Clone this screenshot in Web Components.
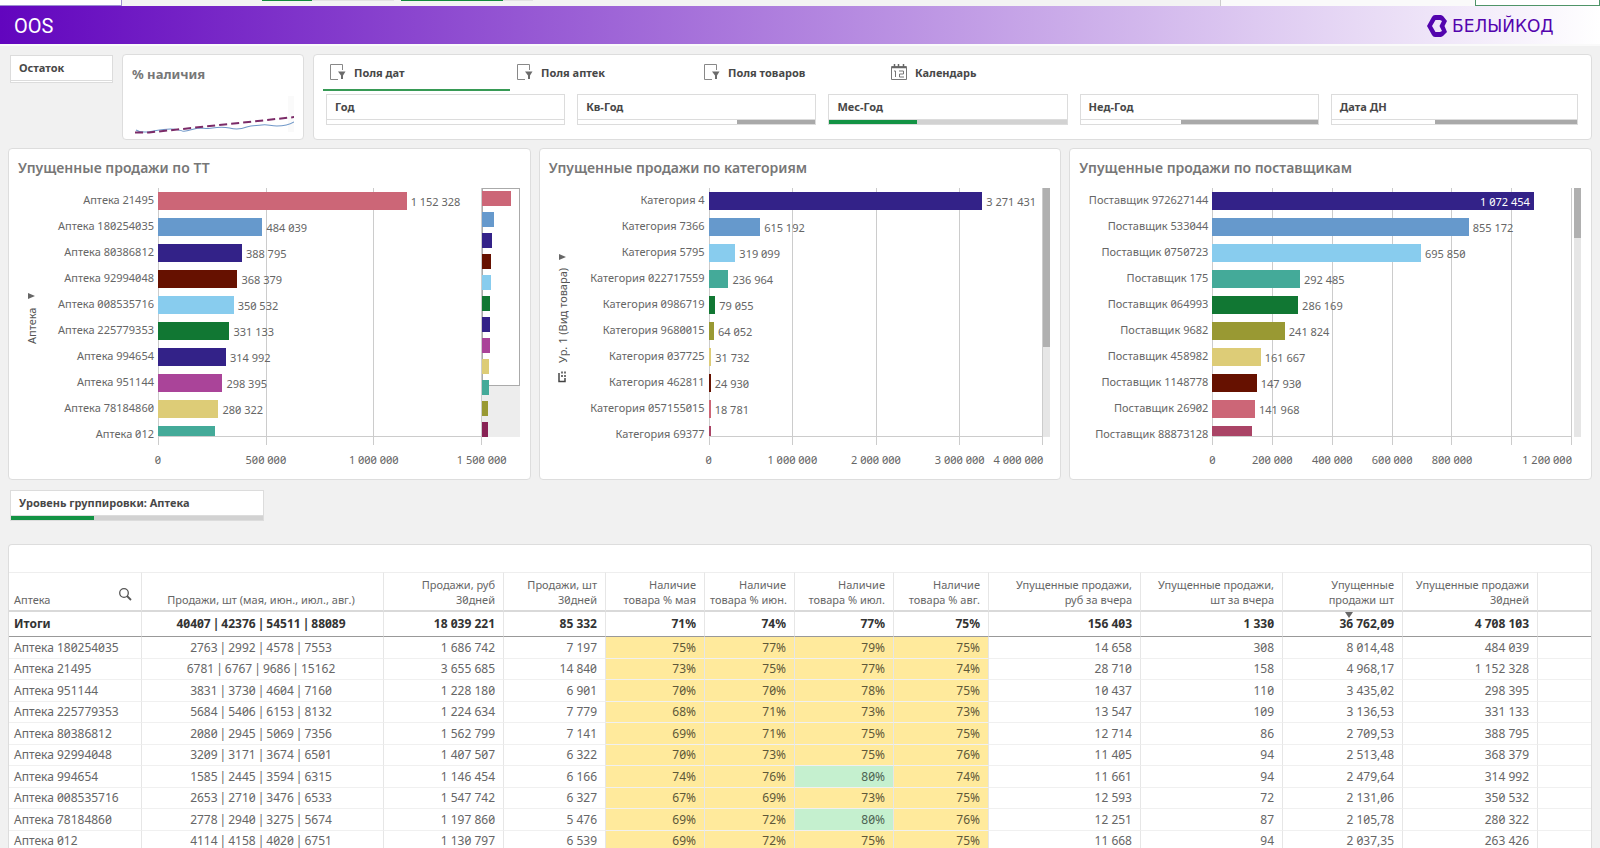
<!DOCTYPE html>
<html lang="ru">
<head>
<meta charset="utf-8">
<title>OOS</title>
<style>
  html, body { margin: 0; height: 100%; }
  body { overflow: hidden; background: #f1f1f1; color: #666; font: 12px/15px "Noto Sans", "Open Sans", sans-serif; font-feature-settings: "zero"; }
</style>
</head>
<body>
<oos-dashboard></oos-dashboard>

<script>
const define = (name, css, render) => customElements.define(name, class extends HTMLElement {
  connectedCallback() {
    if (this.shadowRoot) return;
    this.attachShadow({ mode: 'open' });
    const t = document.createElement('template');
    t.innerHTML = `<style>*{box-sizing:border-box} button{font:inherit;font-feature-settings:inherit;color:inherit;background:none;border:0;padding:0;text-align:left;cursor:pointer}${css}</style>${render(this)}`;
    this.shadowRoot.append(t.content.cloneNode(true));
  }
});
const fmt = n => String(n).replace(/\B(?=(\d{3})+$)/g, '\u00a0');

/* Strip of the selection bar above the sheet */
define('selection-strip', `
  :host { display: flex; flex: none; height: 6px; background: #f3f3f3; }
  .first { width: 122px; background: #fff; border: solid #9d8fd0; border-width: 0 1px 1px 0; }
  .bars { flex: 1; display: flex; padding-left: 140px; }
  i { height: 1px; background: #e2e2e2; }
  i.on { background: #128a3c; }
  .tail { width: 255px; border-left: 1px solid #ccc; background: #fafafa; }
  .last { width: 125px; border: 1px solid #4f9468; border-top: 0; background: #fff; }
`, () => `<div class="first"></div>
  <div class="bars"><i class="on" style="width:50px"></i><i style="width:82px"></i><i style="width:7px;background:none"></i><i class="on" style="width:102px"></i><i style="width:30px"></i></div>
  <div class="tail"></div><div class="last"></div>`);

/* Sheet title with the company mark */
define('sheet-banner', `
  :host { display: flex; flex: none; align-items: center; justify-content: space-between; height: 40px; padding: 2px 37px 0 14px;
    border-bottom: 2px solid #fafafa; background: linear-gradient(90deg, #6205be, #fff); }
  h1 { margin: 0; font: 400 20px/24px Roboto, sans-serif; color: #fff; }
  a { display: flex; align-items: center; gap: 5px; width: 136px; color: #5304ae; text-decoration: none; font: 17px/20px "DejaVu Sans", sans-serif; }
`, () => `<h1><slot></slot></h1>
  <a href="#"><svg width="20" height="22" viewBox="0 0 20 22"><path fill="currentColor" fill-rule="evenodd" d="M0 11 5 2Q6 0 8 0h6l2 1 4 5-2.500 5 2.500 6-4 4-2 1H8q-2 0-3-2zM5 11 8.500 17h4.500l2-1-2.500-5L15 6l-2-1H8.500z"/></svg>БЕЛЫЙКОД</a>`);

/* Collapsed list box; the strip at the bottom shows the selection state */
define('filter-box', `
  :host { display: block; min-width: 0; }
  button { display: block; width: 100%; height: 31px; border: 1px solid #dcdcdc; background: #fff; }
  span { display: block; height: 25px; padding-left: 8px; font-weight: 700; font-size: 11px; line-height: 24px; color: #484848; border-bottom: 1px solid #dcdcdc; }
  i { display: block; height: 4px; }
  :host([small]) button { height: 28px; }
  :host([small]) i { height: 1px; }
`, el => `<button type="button"><span><slot></slot></span><i style="background:${el.getAttribute('state') || '#fff'}"></i></button>`);

define('sheet-card', `
  :host { display: block; min-width: 0; background: #fff; border: 1px solid #ddd; border-radius: 4px; }
`, () => `<slot></slot>`);

define('trend-kpi', `
  :host { display: flex; flex-direction: column; justify-content: space-between; height: 84px; padding: 9px 9px 4px; }
  h2 { margin: 0; font-size: 13px; line-height: 20px; font-weight: 700; color: #777; }
  svg { display: block; width: 100%; height: 40px; }
`, () => `<h2><slot></slot></h2>
  <svg viewBox="0 0 161 40" preserveAspectRatio="none" fill="none">
    <path d="M155 1h6v36h-6z" fill="#fafafa"/>
    <path d="M4 35c4 3 8 2 12 2 7-1 14-3 22-3 6 0 8 1 12 2 5 1 9-2 16-3 5 0 10 1 14 0 6-1 12-1 17 0 7 2 12 1 17-1 6-2 10-1 15-2 6-1 8 1 15 1 7 0 12-1 17-4" stroke="#6f97c8"/>
    <path d="M3 37.500h14L162 22" stroke="#7b2b68" stroke-width="2" stroke-dasharray="8 4"/>
  </svg>`);

const FILTER_ICON = `<svg width="16" height="16" viewBox="0 0 16 16"><path d="M12.500 6V.5H.5v15h7.500" fill="none" stroke="#888"/><path d="M8 7.500h7.500L13 11.500V15h-2v-3.500z" fill="#6c6c6c"/></svg>`;
const CAL_ICON = `<svg width="16" height="16" viewBox="0 0 16 16" fill="none" stroke="#777"><path d="M.5 2.500h15v13H.5z"/><path d="M1 3.500h14M3.500 0v3M7.500 0v3M12.500 0v3" stroke="#666" stroke-width="1.500"/><path d="M3 7h1.500v6M8 7h4.500v3H8.500v3H13"/></svg>`;
define('tab-strip', `
  :host { display: flex; margin-left: 9px; height: 36px; }
  button { display: flex; align-items: center; gap: 8px; width: 187px; padding: 0 7px; font-weight: 700; font-size: 11px; color: #484848; border-bottom: 2px solid transparent; }
  button[aria-selected=true] { border-color: #379a55; }
`, () => ['Поля дат', 'Поля аптек', 'Поля товаров', 'Календарь'].map((t, i) =>
  `<button type="button" role="tab" aria-selected="${!i}">${i < 3 ? FILTER_ICON : CAL_ICON}<span>${t}</span></button>`).join(''));

/* Horizontal bar chart with gridlines, value labels and a scroll strip */
const CHARTS = {
  shops: { title: 'Упущенные продажи по ТТ', axis: 'Аптека', label: 149, side: 38, max: 1500000, steps: 3, mini: true,
    data: [['Аптека 21495', 1152328, '#cc6677'], ['Аптека 180254035', 484039, '#6699cc'], ['Аптека 80386812', 388795, '#332288'], ['Аптека 92994048', 368379, '#661100'], ['Аптека 008535716', 350532, '#88ccee'], ['Аптека 225779353', 331133, '#117733'], ['Аптека 994654', 314992, '#332288'], ['Аптека 951144', 298395, '#aa4499'], ['Аптека 78184860', 280322, '#ddcc77'], ['Аптека 012', 263426, '#44aa99']] },
  categories: { title: 'Упущенные продажи по категориям', axis: 'Ур. 1 (Вид товара)', drill: true, label: 169, side: 7, max: 4000000, steps: 4, thumb: 159,
    data: [['Категория 4', 3271431, '#332288'], ['Категория 7366', 615192, '#6699cc'], ['Категория 5795', 319099, '#88ccee'], ['Категория 022717559', 236964, '#44aa99'], ['Категория 0986719', 79055, '#117733'], ['Категория 9680015', 64052, '#999933'], ['Категория 037725', 31732, '#ddcc77'], ['Категория 462811', 24930, '#661100'], ['Категория 057155015', 18781, '#cc6677'], ['Категория 69377', 18000, '#aa4466']] },
  vendors: { title: 'Упущенные продажи по поставщикам', label: 142, side: 9, max: 1200000, steps: 6, skip: 5, thumb: 50,
    data: [['Поставщик 972627144', 1072454, '#332288'], ['Поставщик 533044', 855172, '#6699cc'], ['Поставщик 0750723', 695850, '#88ccee'], ['Поставщик 175', 292485, '#44aa99'], ['Поставщик 064993', 286169, '#117733'], ['Поставщик 9682', 241824, '#999933'], ['Поставщик 458982', 161667, '#ddcc77'], ['Поставщик 1148778', 147930, '#661100'], ['Поставщик 26902', 141968, '#cc6677'], ['Поставщик 88873128', 131900, '#aa4466']] }
};
define('bar-chart', `
  :host { display: block; height: 330px; font-size: 11px; }
  h2 { margin: 0; padding: 9px 9px 10px; font-size: 14px; line-height: 20px; font-weight: 600; color: #777; }
  .body { display: grid; grid-template-rows: 249px 8px 29px; padding-right: 10px; }
  .left { grid-row: 1; display: flex; padding-right: 4px; }
  .axis { display: flex; align-items: center; justify-content: center; gap: 8px; width: 20px; margin: 12px 0 0 13px; writing-mode: vertical-rl; transform: rotate(180deg); line-height: 20px; color: #555; white-space: nowrap; }
  .axis .drill { transform: rotate(90deg); }
  .labels { flex: 1; min-width: 0; text-align: right; white-space: nowrap; }
  .labels div { height: 26px; line-height: 24px; }
  .grid { grid-area: 1 / 2 / 3 / 3; display: flex; }
  .grid i { flex: 1; border-left: 1px solid #ccc; }
  .grid i:last-child { border-right: 1px solid #ccc; }
  .rows { grid-area: 1 / 2 / 2 / 3; overflow: hidden; padding-top: 4px; border-bottom: 1px solid #ccc; z-index: 1; }
  .row { display: flex; align-items: center; height: 18px; margin-bottom: 8px; white-space: nowrap; }
  .row i { flex: none; align-self: stretch; display: flex; align-items: center; justify-content: flex-end; margin-right: 4px; font-style: normal; color: #fff; padding-right: 4px; }
  .row i.bare { padding: 0; }
  .ticks { grid-area: 3 / 2 / 4 / 3; display: flex; justify-content: space-between; padding-top: 7px; }
  .ticks span { width: 0; display: flex; justify-content: center; white-space: nowrap; }
  .ticks .end { justify-content: flex-end; }
  .side { grid-area: 1 / 3 / 2 / 4; }
  .scroll { background: #e6e6e6; }
  .scroll div { background: #b0b0b0; }
  .pad { margin-left: 2px; }
  .mini { display: grid; background: #ededed; }
  .mini > * { grid-area: 1 / 1; }
  .view { height: 198px; background: #fff; border: 1px solid #aaa; }
  .thumbs { padding-top: 3px; }
  .thumbs i { display: block; height: 15px; margin-bottom: 6px; }
  .thumbs i:last-child { margin: 0; }
`, el => {
  const c = CHARTS[el.getAttribute('data')];
  const mini = c.mini ? [...c.data, ['', 250000, '#999933'], ['', 220000, '#882255']] : [];
  const steps = Array.from({ length: c.steps + 1 }, (_, i) => i);
  return `<h2>${c.title}</h2>
  <div class="body" style="grid-template-columns:${c.label}px 1fr ${c.side}px">
    <div class="left">
      ${c.axis ? `<div class="axis">${c.drill ? '<svg class="drill" width="12" height="12" viewBox="0 0 12 12" fill="none" stroke="#444" stroke-width="1.500"><path d="M10 2H1.500v6H5"/><path d="M6 5h2M9.500 5h2M6 8h2M9.500 8h2"/></svg>' : ''}<span>${c.axis}</span><svg width="7" height="6" viewBox="0 0 7 6"><path d="M7 0v6L0 3z" fill="#666"/></svg></div>` : ''}
      <div class="labels">${c.data.map(d => `<div>${d[0]}</div>`).join('')}</div>
    </div>
    <div class="grid">${'<i></i>'.repeat(c.steps)}</div>
    <div class="rows">${c.data.map((d, i) => {
      const inside = d[1] / c.max > .85, text = i < 9 ? fmt(d[1]) : '';
      return `<div class="row"><i class="${inside ? '' : 'bare'}" style="width:${d[1] / c.max * 100}%;min-width:2px;background:${d[2]}">${inside ? text : ''}</i>${inside ? '' : text}</div>`;
    }).join('')}</div>
    <div class="ticks">${steps.map(i => `<span class="${i === c.steps && !c.mini ? 'end' : ''}">${i === c.skip ? '' : fmt(c.max / c.steps * i)}</span>`).join('')}</div>
    ${c.mini ? `<div class="side mini"><div class="view"></div><div class="thumbs">${mini.map(d => `<i style="width:${Math.max(6, Math.round(d[1] / 1152328 * 29))}px;background:${d[2]}"></i>`).join('')}</div></div>`
      : `<div class="side scroll${c.side > 7 ? ' pad' : ''}"><div style="height:${c.thumb}px"></div></div>`}
  </div>`;
});

const HEAD = ['Аптека', 'Продажи, шт (мая, июн., июл., авг.)', 'Продажи, руб<br>30дней', 'Продажи, шт<br>30дней', 'Наличие<br>товара % мая', 'Наличие<br>товара % июн.', 'Наличие<br>товара % июл.', 'Наличие<br>товара % авг.', 'Упущенные продажи,<br>руб за вчера', 'Упущенные продажи,<br>шт за вчера', 'Упущенные<br>продажи шт', 'Упущенные продажи<br>30дней', ''];
const TOTAL = ['Итоги', '40407|42376|54511|88089', '18 039 221', '85 332', '71%', '74%', '77%', '75%', '156 403', '1 330', '36 762,09', '4 708 103', ''];
const ROWS = `Аптека 180254035;2763|2992|4578|7553;1 686 742;7 197;75%;77%;79%;75%;14 658;308;8 014,48;484 039
Аптека 21495;6781|6767|9686|15162;3 655 685;14 840;73%;75%;77%;74%;28 710;158;4 968,17;1 152 328
Аптека 951144;3831|3730|4604|7160;1 228 180;6 901;70%;70%;78%;75%;10 437;110;3 435,02;298 395
Аптека 225779353;5684|5406|6153|8132;1 224 634;7 779;68%;71%;73%;73%;13 547;109;3 136,53;331 133
Аптека 80386812;2080|2945|5069|7356;1 562 799;7 141;69%;71%;75%;75%;12 714;86;2 709,53;388 795
Аптека 92994048;3209|3171|3674|6501;1 407 507;6 322;70%;73%;75%;76%;11 405;94;2 513,48;368 379
Аптека 994654;1585|2445|3594|6315;1 146 454;6 166;74%;76%;80%;74%;11 661;94;2 479,64;314 992
Аптека 008535716;2653|2710|3476|6533;1 547 742;6 327;67%;69%;73%;75%;12 593;72;2 131,06;350 532
Аптека 78184860;2778|2940|3275|5674;1 197 860;5 476;69%;72%;80%;76%;12 251;87;2 105,78;280 322
Аптека 012;4114|4158|4020|6751;1 130 797;6 539;69%;72%;75%;75%;11 668;94;2 037,35;263 426`.split('\n').map(r => [...r.split(';'), '']);
const WIDTHS = [133, 242, 120, 102, 99, 90, 99, 95, 152, 142, 120, 135, 60];
define('sales-table', `
  :host { display: block; padding-top: 27px; }
  table { width: 100%; border-collapse: separate; border-spacing: 0; table-layout: fixed; }
  th, td { padding: 0 8px 0 5px; text-align: right; border-right: 1px solid #e6e6e6; border-bottom: 1px solid #f0f0f0; white-space: nowrap; font-weight: 400; }
  th:first-child, td:first-child { text-align: left; }
  th:nth-child(2), td:nth-child(2) { text-align: center; }
  th:last-child, td:last-child { border-right: 0; }
  thead th { height: 40px; padding-bottom: 3px; vertical-align: bottom; font-size: 11px; line-height: 15px; border-top: 1px solid #eee; border-bottom: 2px solid #d9d9d9; }
  thead div { display: flex; justify-content: space-between; align-items: flex-end; }
  thead button { margin: 0 1px 6px 0; height: 13px; }
  svg { display: block; }
  .total td { position: relative; height: 25px; padding-bottom: 2px; font-weight: 700; color: #333; border-bottom: 1px solid #999; }
  .total svg { position: absolute; left: 62px; top: 0; }
  .data > * { height: 21px; line-height: 20px; }
  .data:nth-child(odd) > * { height: 22px; }
  td.mid { background: #ffea9c; color: #5e5838; }
  td.good { background: #c5f0cf; color: #4d6453; }
  b { font-weight: inherit; margin: 0 2px; }
`, () => {
  const cell = (t, i) => i === 1 ? t.replace(/\|/g, '<b>|</b>') : i ? t.replace(/ /g, '\u00a0') : t;
  return `<table><colgroup>${WIDTHS.map((w, i) => `<col${i < 12 ? ` style="width:${w}px"` : ''}>`).join('')}</colgroup>
  <thead><tr>${HEAD.map((h, i) => `<th scope="col">${i ? h : `<div>${h}<button type="button" aria-label="Поиск"><svg width="13" height="13" viewBox="0 0 13 13" fill="none" stroke="#555"><circle cx="5" cy="5" r="4.300" stroke-width="1.300"/><path d="M8 8l4 4" stroke-width="1.800"/></svg></button></div>`}</th>`).join('')}</tr></thead>
  <tbody><tr class="total">${TOTAL.map((t, i) => `<td>${i === 10 ? '<svg width="8" height="6"><path d="M0 0h8L4 6z" fill="#666"/></svg>' : ''}${cell(t, i)}</td>`).join('')}</tr></tbody>
  <tbody>${ROWS.map(r => `<tr class="data">${r.map((t, i) => `<td class="${i > 3 && i < 8 ? (parseInt(t) >= 80 ? 'good' : 'mid') : ''}">${cell(t, i)}</td>`).join('')}</tr>`).join('')}</tbody></table>`;
});

define('oos-dashboard', `
  :host { display: flex; flex-direction: column; height: 100vh; overflow: hidden; }
  .top { display: grid; grid-template-columns: 103px 182px 1fr; gap: 9px; margin: 8px 8px 0 10px; align-items: start; }
  .top > filter-box { margin-top: 1px; }
  .fields { display: grid; grid-template-columns: repeat(4, 239fr) 247fr; gap: 12px; padding: 3px 13px 14px 12px; }
  .charts { display: grid; grid-template-columns: repeat(3, 1fr); gap: 8px; margin: 8px 8px 0; }
  .group { width: 254px; margin: 10px 10px 23px; }
  .table { flex: 1; min-height: 0; margin: 0 8px; overflow: hidden; border-bottom: 0; border-radius: 4px 4px 0 0; }
`, () => `
  <selection-strip></selection-strip>
  <sheet-banner>OOS</sheet-banner>
  <div class="top">
    <filter-box small>Остаток</filter-box>
    <sheet-card><trend-kpi>% наличия</trend-kpi></sheet-card>
    <sheet-card><tab-strip></tab-strip>
      <div class="fields">
        <filter-box>Год</filter-box>
        <filter-box state="linear-gradient(90deg,#fff 67%,#a9a9a9 67%)">Кв-Год</filter-box>
        <filter-box state="linear-gradient(90deg,#139344 37%,#d2d2d2 37%)">Мес-Год</filter-box>
        <filter-box state="linear-gradient(90deg,#fff 42%,#a9a9a9 42%)">Нед-Год</filter-box>
        <filter-box state="linear-gradient(90deg,#fff 42%,#a9a9a9 42%)">Дата ДН</filter-box>
      </div>
    </sheet-card>
  </div>
  <div class="charts">
    <sheet-card><bar-chart data="shops"></bar-chart></sheet-card>
    <sheet-card><bar-chart data="categories"></bar-chart></sheet-card>
    <sheet-card><bar-chart data="vendors"></bar-chart></sheet-card>
  </div>
  <filter-box class="group" state="linear-gradient(90deg,#139344 33%,#d2d2d2 33%)">Уровень группировки: Аптека</filter-box>
  <sheet-card class="table"><sales-table></sales-table></sheet-card>`);
</script>
</body>
</html>
